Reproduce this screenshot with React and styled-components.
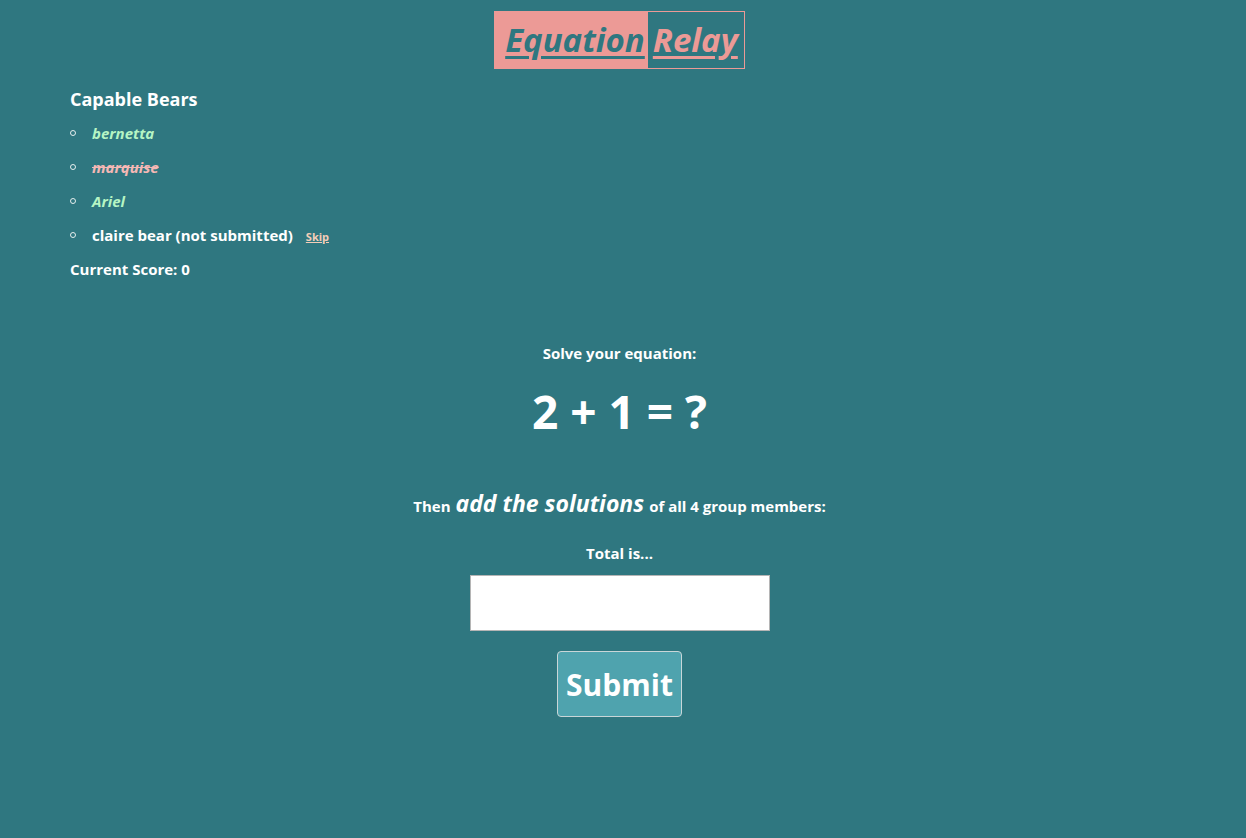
import styled, { createGlobalStyle } from "styled-components";

const GlobalStyle = createGlobalStyle`
    body {
        margin: 0;
        background: #2f7780;
        color: #ffffff;
        font-family: "Open Sans", Lato, sans-serif;
    }
`

const Page = styled.div`
    min-height: 838px;
    padding: 11px 7px 0 0;
    box-sizing: border-box;
`
const Header = styled.div`
    display: flex;
    justify-content: center;
`
const TitleBox = styled.h1`
    display: flex;
    margin: 0;
    border: 1px solid #ec9a96;
    font-size: 33px;
    font-style: italic;
    font-weight: 700;
    line-height: 56px;
`
const TitleWord = styled.span`
    padding: 0 ${props => props.last ? '6px' : '3px'} 0 ${props => props.last ? '5px' : '10px'};
    text-decoration: underline;
    text-underline-offset: 4px;
    background: ${props => props.last ? 'transparent' : '#ec9a96'};
    color: ${props => props.last ? '#ec9a96' : '#2f7780'};
`
const Team = styled.section`
    padding: 18px 70px 0;
`
const TeamName = styled.h2`
    margin: 0 0 12px;
    font-size: 18px;
    font-weight: 700;
`
const Members = styled.ul`
    margin: 0;
    padding: 0;
    list-style: none;
    font-size: 15px;
    font-weight: 700;
`
const Member = styled.li`
    display: flex;
    align-items: baseline;
    line-height: 20px;
    margin-bottom: 14px;
    font-style: ${props => props.status === 'pending' ? 'normal' : 'italic'};
    color: ${props => props.status === 'done' ? '#b6f5c4' : props.status === 'skipped' ? '#f5b8b5' : '#ffffff'};
    text-decoration: ${props => props.status === 'skipped' ? 'line-through' : 'none'};
    &::before {
        content: "";
        align-self: center;
        width: 4px;
        height: 4px;
        margin: 0 16px 0 0;
        border: 1px solid #e6eeee;
        border-radius: 50%;
    }
`
const SkipLink = styled.a`
    margin-left: 13px;
    font-size: 11px;
    line-height: 14px;
    color: #f4cdb8;
    text-decoration: underline;
`
const Score = styled.div`
    margin-top: 1px;
    font-size: 15px;
    font-weight: 700;
`
const Puzzle = styled.main`
    display: flex;
    flex-direction: column;
    align-items: center;
    padding-top: 64px;
`
const Prompt = styled.p`
    margin: 0;
    font-size: 15px;
    font-weight: 700;
    line-height: 20px;
`
const Equation = styled.div`
    margin: 18px 0 0;
    font-size: 46px;
    font-weight: 700;
    line-height: 60px;
`
const Instruction = styled(Prompt)`
    margin-top: 52px;
    display: flex;
    align-items: baseline;
    gap: 5px;
`
const Emphasis = styled.em`
    font-size: 23px;
`
const TotalLabel = styled(Prompt)`
    margin-top: 27px;
`
const TotalInput = styled.input`
    margin-top: 12px;
    width: 300px;
    height: 56px;
    box-sizing: border-box;
    border: 1px solid #b5b5b5;
    background: #ffffff;
    font-size: 18px;
`
const SubmitButton = styled.button`
    margin-top: 20px;
    width: 125px;
    height: 66px;
    padding: 0;
    border: 1px solid #c9d6d8;
    border-radius: 4px;
    background: #4fa3ae;
    color: #ffffff;
    font-family: inherit;
    font-size: 30px;
    font-weight: 700;
`

const members = [
    { name: 'bernetta', status: 'done' },
    { name: 'marquise', status: 'skipped' },
    { name: 'Ariel', status: 'done' },
    { name: 'claire bear (not submitted)', status: 'pending' },
]

const App = () => {
  return (
      <Page>
          <GlobalStyle />
          <Header>
              <TitleBox>
                  <TitleWord>Equation</TitleWord>
                  <TitleWord last>Relay</TitleWord>
              </TitleBox>
          </Header>

          <Team>
              <TeamName>Capable Bears</TeamName>
              <Members>
                  {members.map(m => (
                      <Member key={m.name} status={m.status}>
                          {m.name}
                          {m.status === 'pending' && <SkipLink href="#">Skip</SkipLink>}
                      </Member>
                  ))}
              </Members>
              <Score>Current Score: 0</Score>
          </Team>

          <Puzzle>
              <Prompt>Solve your equation:</Prompt>
              <Equation>2 + 1 = ?</Equation>
              <Instruction>Then <Emphasis>add the solutions</Emphasis> of all 4 group members:</Instruction>
              <TotalLabel>Total is...</TotalLabel>
              <TotalInput type="text" />
              <SubmitButton>Submit</SubmitButton>
          </Puzzle>
      </Page>
  );
};

export default App;
